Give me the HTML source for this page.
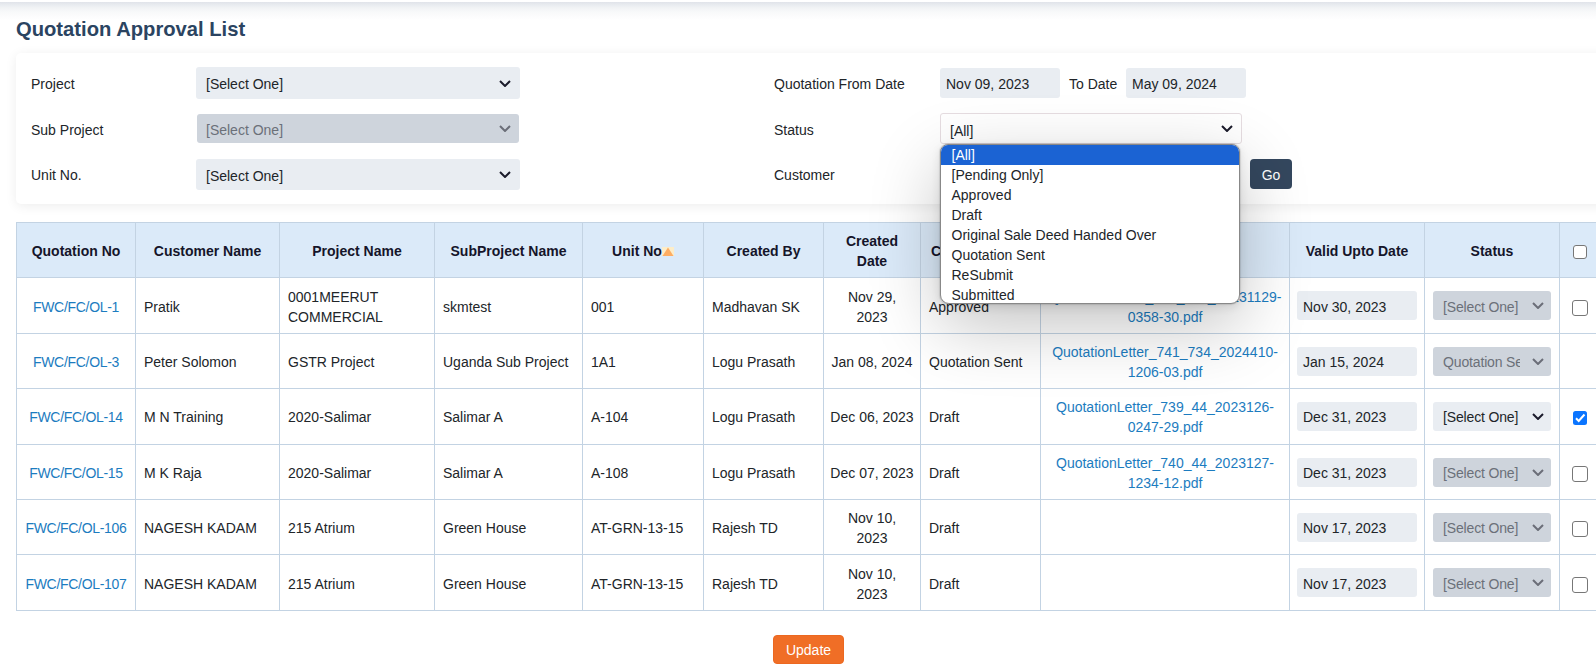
<!DOCTYPE html>
<html><head><meta charset="utf-8">
<style>
*{box-sizing:border-box;}
html,body{margin:0;padding:0;background:#fff;overflow:hidden;width:1596px;height:664px;}
body{font-family:"Liberation Sans",sans-serif;font-size:14px;color:#212529;position:relative;}
.abs{position:absolute;}
.topbar{position:absolute;left:0;top:2px;width:1596px;height:18px;background:linear-gradient(#e0e3e9,#e9ecf0 17%,#f1f3f5 33%,#f8f9fa 55%,#fcfcfd 80%,#fff);}
.title{position:absolute;left:16px;top:17px;font-size:20.2px;font-weight:bold;color:#2b4461;line-height:24px;white-space:nowrap;}
.card{position:absolute;left:16px;top:53px;width:1620px;height:151px;background:#fff;border-radius:5px;box-shadow:0 2px 12px rgba(0,0,0,0.075);}
.lbl{position:absolute;line-height:20px;white-space:nowrap;color:#212529;}
.sel{position:absolute;background:#e9edf2;border-radius:3px;line-height:20px;padding-left:10px;white-space:nowrap;overflow:hidden;color:#212529;}
.sel.dis{background:#ced4dc;color:#6b7079;}
.chev{position:absolute;width:12px;height:7px;}
.inp{position:absolute;background:#e9edf2;border-radius:3px;line-height:20px;white-space:nowrap;color:#212529;}
.btn-go{position:absolute;left:1250px;top:159px;width:42px;height:30px;background:#34475e;color:#fff;border-radius:4px;line-height:32px;text-align:center;}
.btn-upd{position:absolute;left:773px;top:635px;width:71px;height:29px;background:#f06e26;border:1px solid #ec6820;color:#fff;border-radius:4px;padding-top:0px;line-height:28px;text-align:center;}
table{position:absolute;left:16px;top:222px;width:1603px;border-collapse:collapse;table-layout:fixed;}
td,th{border:1px solid #c3d3e3;padding:2px 8px 0 8px;vertical-align:middle;line-height:20px;}
th{background:#dbeaf9;font-weight:bold;color:#15152a;text-align:center;}
td{background:#fff;color:#212529;}
td.c{text-align:center;}
a{color:#1c7cc0;text-decoration:none;}
.cb{display:inline-block;width:16px;height:16px;border:1px solid #777;border-radius:3px;background:#fff;vertical-align:middle;position:relative;top:1px;}

.cbx{position:absolute;left:1572px;width:15px;height:15px;border:1px solid #6f6f6f;border-radius:3px;background:#fff;}
.tin{display:block;width:120px;height:29px;background:#e9edf2;border-radius:3px;padding:6px 0 0 6px;white-space:nowrap;}
.tsel{display:block;position:relative;width:118px;height:29px;background:#ced4dc;color:#6b7079;border-radius:3px;padding:6px 0 0 10px;white-space:nowrap;overflow:hidden;}
.tsel .t{display:block;width:77px;overflow:hidden;letter-spacing:-0.15px;}
.tsel.en{background:#e9edf2;color:#212529;}
.tsel svg{position:absolute;left:99px;top:11px;width:12px;height:7px;}
td.n{white-space:nowrap;}
td.n a{letter-spacing:-0.3px;}
tr.up td{padding-top:0 !important;}
.dd{position:absolute;left:940px;top:144px;width:300px;height:160px;background:#fff;border:1px solid #888;border-radius:8px 8px 9px 9px;overflow:hidden;box-shadow:0 0 1px 1px rgba(0,0,0,0.10),0 3px 10px rgba(0,0,0,0.10),0 22px 70px rgba(0,0,0,0.24);}
.dd div{height:20px;line-height:20px;padding-left:10.5px;white-space:nowrap;color:#212529;}
.dd div.on{background:#1b63d3;color:#fff;}
</style></head>
<body>
<div class="topbar"></div>
<div class="title">Quotation Approval List</div>
<div class="card"></div>

<div class="lbl" style="left:31px;top:74px">Project</div>
<div class="lbl" style="left:31px;top:120px">Sub Project</div>
<div class="lbl" style="left:31px;top:165px">Unit No.</div>

<div class="sel" style="left:196px;top:67px;width:324px;height:32px;padding-top:7px">[Select One]</div>
<div class="sel dis" style="left:197px;top:114px;width:322px;height:29px;padding-top:6px;padding-left:9px">[Select One]</div>
<div class="sel" style="left:196px;top:159px;width:324px;height:31px;padding-top:7px">[Select One]</div>
<svg class="chev" style="left:499px;top:80px" viewBox="0 0 12 7"><path d="M1 1l5 5 5-5" fill="none" stroke="#1b1b2b" stroke-width="2"/></svg>
<svg class="chev" style="left:499px;top:125px" viewBox="0 0 12 7"><path d="M1 1l5 5 5-5" fill="none" stroke="#6b6e78" stroke-width="2"/></svg>
<svg class="chev" style="left:499px;top:171px" viewBox="0 0 12 7"><path d="M1 1l5 5 5-5" fill="none" stroke="#1b1b2b" stroke-width="2"/></svg>

<div class="lbl" style="left:774px;top:74px">Quotation From Date</div>
<div class="lbl" style="left:774px;top:120px">Status</div>
<div class="lbl" style="left:774px;top:165px">Customer</div>

<div class="inp" style="left:940px;top:68px;width:120px;height:30px;padding:6px 0 0 6px">Nov 09, 2023</div>
<div class="lbl" style="left:1069px;top:74px">To Date</div>
<div class="inp" style="left:1126px;top:68px;width:120px;height:30px;padding:6px 0 0 6px">May 09, 2024</div>

<div class="abs" style="left:940px;top:113px;width:302px;height:31px;background:#fff;border:1px solid #e6dde1;border-radius:3px;"></div>
<div class="lbl" style="left:950px;top:121px">[All]</div>
<svg class="chev" style="left:1221px;top:125px" viewBox="0 0 12 7"><path d="M1 1l5 5 5-5" fill="none" stroke="#1b1b2b" stroke-width="2"/></svg>

<div class="btn-go">Go</div>

<table>
<colgroup><col style="width:119px"><col style="width:144px"><col style="width:155px"><col style="width:148px"><col style="width:121px"><col style="width:120px"><col style="width:97px"><col style="width:120px"><col style="width:249px"><col style="width:135px"><col style="width:135px"><col style="width:60px"></colgroup>
<tr style="height:55px"><th>Quotation No</th><th>Customer Name</th><th>Project Name</th><th>SubProject Name</th><th>Unit No<svg width="12" height="9" viewBox="0 0 12 9" style="vertical-align:baseline;position:relative;top:0px"><rect width="12" height="9" fill="#fcedc9"/><path d="M0.5 9L6 0.5L11.5 9Z" fill="#fdad63"/></svg></th><th>Created By</th><th>Created Date</th><th style="text-align:left;padding-left:10px">C</th><th>Quotation Letter</th><th>Valid Upto Date</th><th>Status</th><th style="text-align:left;padding-left:12px"><span class="cb" style="top:0;width:14px;height:14px;left:1px"></span></th></tr>
<tr style="height:56px"><td class="c n" style="padding:2px 0 0 0"><a>FWC/FC/OL-1</a></td><td>Pratik</td><td>0001MEERUT COMMERCIAL</td><td>skmtest</td><td>001</td><td>Madhavan SK</td><td class="c">Nov 29,<br>2023</td><td>Approved</td><td class="c"><a>QuotationLetter_742_734_20231129-0358-30.pdf</a></td><td style="padding:0 8px 0 7px" class="ic"><div class="tin">Nov 30, 2023</div></td><td style="padding:0 9px 0 8px" class="ic"><div class="tsel"><span class="t">[Select One]</span><svg viewBox="0 0 12 7"><path d="M1 1l5 5 5-5" fill="none" stroke="#6b6e78" stroke-width="2"/></svg></div></td><td style="padding:0 0 0 12px" class="ic"><span class="cb"></span></td></tr>
<tr style="height:55px"><td class="c n" style="padding:2px 0 0 0"><a>FWC/FC/OL-3</a></td><td>Peter Solomon</td><td>GSTR Project</td><td>Uganda Sub Project</td><td>1A1</td><td>Logu Prasath</td><td class="c n" style="padding:2px 0 0 0">Jan 08, 2024</td><td>Quotation Sent</td><td class="c"><a>QuotationLetter_741_734_2024410-1206-03.pdf</a></td><td style="padding:0 8px 0 7px" class="ic"><div class="tin" style="padding-top:5px">Jan 15, 2024</div></td><td style="padding:0 9px 0 8px" class="ic"><div class="tsel" style="padding-top:5px"><span class="t">Quotation Sent</span><svg viewBox="0 0 12 7"><path d="M1 1l5 5 5-5" fill="none" stroke="#6b6e78" stroke-width="2"/></svg></div></td><td style="padding:0 0 0 12px" class="ic"></td></tr>
<tr class="up" style="height:56px"><td class="c n" style="padding:2px 0 0 0"><a>FWC/FC/OL-14</a></td><td>M N Training</td><td>2020-Salimar</td><td>Salimar A</td><td>A-104</td><td>Logu Prasath</td><td class="c n" style="padding:2px 0 0 0">Dec 06, 2023</td><td>Draft</td><td class="c"><a>QuotationLetter_739_44_2023126-0247-29.pdf</a></td><td style="padding:0 8px 0 7px" class="ic"><div class="tin" style="padding-top:5px">Dec 31, 2023</div></td><td style="padding:0 9px 0 8px" class="ic"><div class="tsel en" style="padding-top:5px"><span class="t">[Select One]</span><svg viewBox="0 0 12 7"><path d="M1 1l5 5 5-5" fill="none" stroke="#1b1b2b" stroke-width="2"/></svg></div></td><td style="padding:0 0 0 12px" class="ic"><svg class="chk" width="14" height="14" viewBox="0 0 14 14" style="vertical-align:middle;position:relative;left:1px"><rect width="14" height="14" rx="2.5" fill="#0b75ff"/><path d="M3 7.3L5.7 10L11.5 3.5" fill="none" stroke="#fff" stroke-width="2"/></svg></td></tr>
<tr style="height:55px"><td class="c n" style="padding:2px 0 0 0"><a>FWC/FC/OL-15</a></td><td>M K Raja</td><td>2020-Salimar</td><td>Salimar A</td><td>A-108</td><td>Logu Prasath</td><td class="c n" style="padding:2px 0 0 0">Dec 07, 2023</td><td>Draft</td><td class="c"><a>QuotationLetter_740_44_2023127-1234-12.pdf</a></td><td style="padding:0 8px 0 7px" class="ic"><div class="tin" style="padding-top:5px">Dec 31, 2023</div></td><td style="padding:0 9px 0 8px" class="ic"><div class="tsel" style="padding-top:5px"><span class="t">[Select One]</span><svg viewBox="0 0 12 7"><path d="M1 1l5 5 5-5" fill="none" stroke="#6b6e78" stroke-width="2"/></svg></div></td><td style="padding:0 0 0 12px" class="ic"><span class="cb"></span></td></tr>
<tr style="height:55px"><td class="c n" style="padding:2px 0 0 0"><a>FWC/FC/OL-106</a></td><td>NAGESH KADAM</td><td>215 Atrium</td><td>Green House</td><td>AT-GRN-13-15</td><td>Rajesh TD</td><td class="c">Nov 10,<br>2023</td><td>Draft</td><td class="c"></td><td style="padding:0 8px 0 7px" class="ic"><div class="tin" style="padding-top:5px">Nov 17, 2023</div></td><td style="padding:0 9px 0 8px" class="ic"><div class="tsel" style="padding-top:5px"><span class="t">[Select One]</span><svg viewBox="0 0 12 7"><path d="M1 1l5 5 5-5" fill="none" stroke="#6b6e78" stroke-width="2"/></svg></div></td><td style="padding:0 0 0 12px" class="ic"><span class="cb"></span></td></tr>
<tr style="height:56px"><td class="c n" style="padding:2px 0 0 0"><a>FWC/FC/OL-107</a></td><td>NAGESH KADAM</td><td>215 Atrium</td><td>Green House</td><td>AT-GRN-13-15</td><td>Rajesh TD</td><td class="c">Nov 10,<br>2023</td><td>Draft</td><td class="c"></td><td style="padding:0 8px 0 7px" class="ic"><div class="tin">Nov 17, 2023</div></td><td style="padding:0 9px 0 8px" class="ic"><div class="tsel"><span class="t">[Select One]</span><svg viewBox="0 0 12 7"><path d="M1 1l5 5 5-5" fill="none" stroke="#6b6e78" stroke-width="2"/></svg></div></td><td style="padding:0 0 0 12px" class="ic"><span class="cb"></span></td></tr>
</table>

<div class="btn-upd">Update</div>

<div class="dd">
<div class="on">[All]</div>
<div>[Pending Only]</div>
<div>Approved</div>
<div>Draft</div>
<div>Original Sale Deed Handed Over</div>
<div>Quotation Sent</div>
<div>ReSubmit</div>
<div>Submitted</div>
</div>
</body></html>
